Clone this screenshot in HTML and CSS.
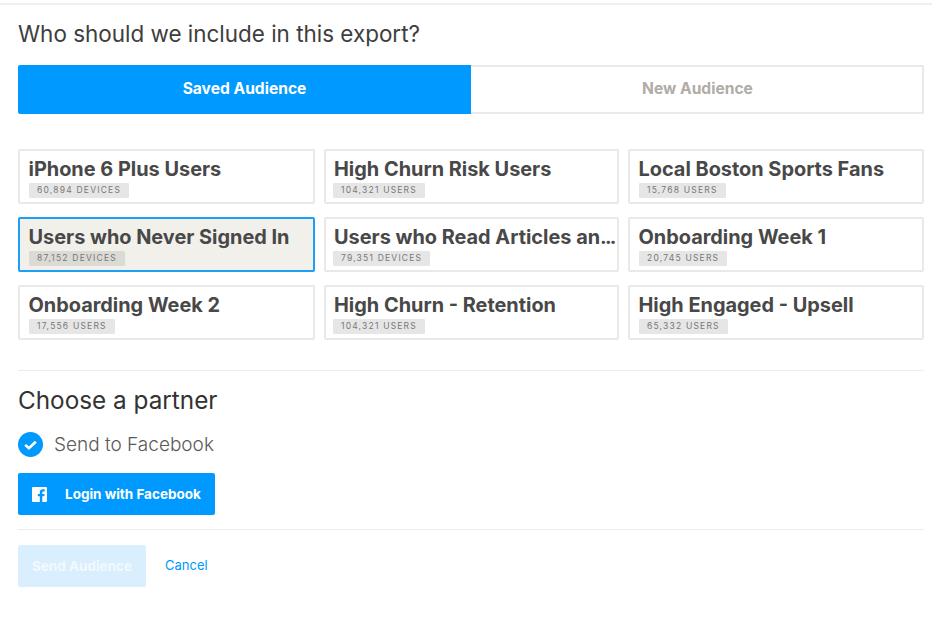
FILE: index.html
```html
<!DOCTYPE html>
<html lang="en">
<head>
<meta charset="utf-8">
<title>Export</title>
<link rel="stylesheet" href="styles.css">
</head>
<body>
<main class="page">
  <h1 class="title">Who should we include in this export?</h1>
  <div class="tabs">
    <div class="tab tab-active">Saved Audience</div>
    <div class="tab tab-idle">New Audience</div>
  </div>
  <div class="grid">
    <div class="card"><div class="name">iPhone 6 Plus Users</div><span class="badge">60,894 DEVICES</span></div>
    <div class="card"><div class="name">High Churn Risk Users</div><span class="badge">104,321 USERS</span></div>
    <div class="card"><div class="name">Local Boston Sports Fans</div><span class="badge">15,768 USERS</span></div>
    <div class="card card-selected"><div class="name">Users who Never Signed In</div><span class="badge">87,152 DEVICES</span></div>
    <div class="card"><div class="name">Users who Read Articles an<span class="dots">...</span></div><span class="badge">79,351 DEVICES</span></div>
    <div class="card"><div class="name">Onboarding Week 1</div><span class="badge">20,745 USERS</span></div>
    <div class="card"><div class="name">Onboarding Week 2</div><span class="badge">17,556 USERS</span></div>
    <div class="card"><div class="name">High Churn - Retention</div><span class="badge">104,321 USERS</span></div>
    <div class="card"><div class="name">High Engaged - Upsell</div><span class="badge">65,332 USERS</span></div>
  </div>
  <hr class="rule rule-partner">
  <h2 class="subtitle">Choose a partner</h2>
  <div class="partner">
    <svg class="check" viewBox="0 0 25 25" width="25" height="25" aria-hidden="true">
      <circle cx="12.5" cy="12.5" r="12.5" fill="#0099ff"/>
      <path d="M7.2 12.9l3.700 3.400 6.900-6.600" fill="none" stroke="#fff" stroke-width="2.600"/>
    </svg>
    <span class="partner-label">Send to Facebook</span>
  </div>
  <button class="fb-btn" type="button">
    <svg class="fb-icon" viewBox="0 0 15 15" width="15" height="15" aria-hidden="true">
      <path fill="#fff" d="M1 0h13a1 1 0 0 1 1 1v13a1 1 0 0 1-1 1h-3.700v-5.800h2l.3-2.300h-2.300V5.500c0-.7.200-1.100 1.100-1.100h1.300V2.300c-.2 0-1-.1-1.900-.1-1.800 0-3 1.100-3 3.100v1.600h-2v2.300h2V15H1a1 1 0 0 1-1-1V1a1 1 0 0 1 1-1z"/>
    </svg>
    <span>Login with Facebook</span>
  </button>
  <hr class="rule rule-actions">
  <div class="actions">
    <button class="send" type="button">Send Audience</button>
    <a class="cancel" href="#">Cancel</a>
  </div>
</main>
</body>
</html>
```
FILE: styles.css
```css
* { box-sizing: border-box; }
html, body { margin: 0; padding: 0; background: #fff; }
body { font-family: "Inter", "Lato", "Liberation Sans", sans-serif; color: #3f3f3f; overflow: hidden; }
.page { width: 932px; height: 617px; padding: 3px 8px 0 18px; }
.page::before { content: ""; display: block; height: 2px; margin: 0 -8px 0 -18px; background: #f1f0ec; }
.title { margin: 0; padding-top: 14px; height: 60px; font-size: 22.450px; line-height: 29px; font-weight: 400; color: #3e3e3e; }
.tabs { display: flex; height: 49px; }
.tab { display: flex; align-items: center; justify-content: center; padding-bottom: 2px; font-size: 15.600px; font-weight: 700; }
.tab-active { width: 453px; background: #0099ff; color: #fff; border-radius: 2px 0 0 2px; }
.tab-idle { flex: 1; padding-left: 2px; border: 2px solid #e9e9e9; border-left: 0; border-radius: 0 2px 2px 0; color: #b0aca7; }
.grid { display: grid; grid-template-columns: 297px 295px 296px; column-gap: 9px; row-gap: 13px; grid-auto-rows: 55px; margin-top: 35px; }
.card { border: 2px solid #e9e9e9; border-radius: 2px; padding: 5px 4px 0 8.500px; min-width: 0; background: #fff; }
.card:nth-child(3n+2) { padding-left: 8px; }
.card-selected { border-color: #1ba0f5; background: #f1f0eb; }
.name { font-size: 19.900px; line-height: 27px; font-weight: 700; color: #484848; white-space: nowrap; }
.dots { letter-spacing: -1.800px; }
.badge { display: inline-block; margin-left: .5px; height: 15px; padding: 0 8px; background: #e6e6e6; border-radius: 1px; font-size: 8.500px; line-height: 15px; letter-spacing: 1.200px; color: #787878; vertical-align: top; }
.card:nth-child(3n+2) .badge { margin-left: -1px; }
.card-selected .badge { background: #dbdad5; }
.rule { border: 0; height: 1px; margin: 0; background: #eeede9; }
.rule-partner { margin-top: 30px; }
.subtitle { margin: 0; padding-top: 14px; height: 61px; font-size: 24.300px; line-height: 30px; font-weight: 400; color: #333; }
.partner { display: flex; align-items: center; height: 25px; gap: 11px; }
.partner-label { font-size: 19px; font-weight: 300; color: #5a5a5a; }
.fb-btn { display: flex; align-items: center; width: 197px; height: 42px; margin-top: 16px; padding: 0 0 0 14px; border: 0; border-radius: 2px; background: #0099ff; color: #fff; font: 700 13.500px "Inter", "Lato", "Liberation Sans", sans-serif; }
.fb-icon { margin-right: 18px; flex: none; }
.rule-actions { margin-top: 14px; }
.actions { display: flex; align-items: center; margin-top: 15px; }
.send { width: 128px; height: 42px; border: 0; border-radius: 2px; background: #d9effe; color: #f2f9ff; font: 700 13.500px "Inter", "Lato", "Liberation Sans", sans-serif; padding: 0; }
.cancel { margin-left: 19px; margin-top: -2px; font-size: 13px; color: #0099ff; text-decoration: none; }
```
